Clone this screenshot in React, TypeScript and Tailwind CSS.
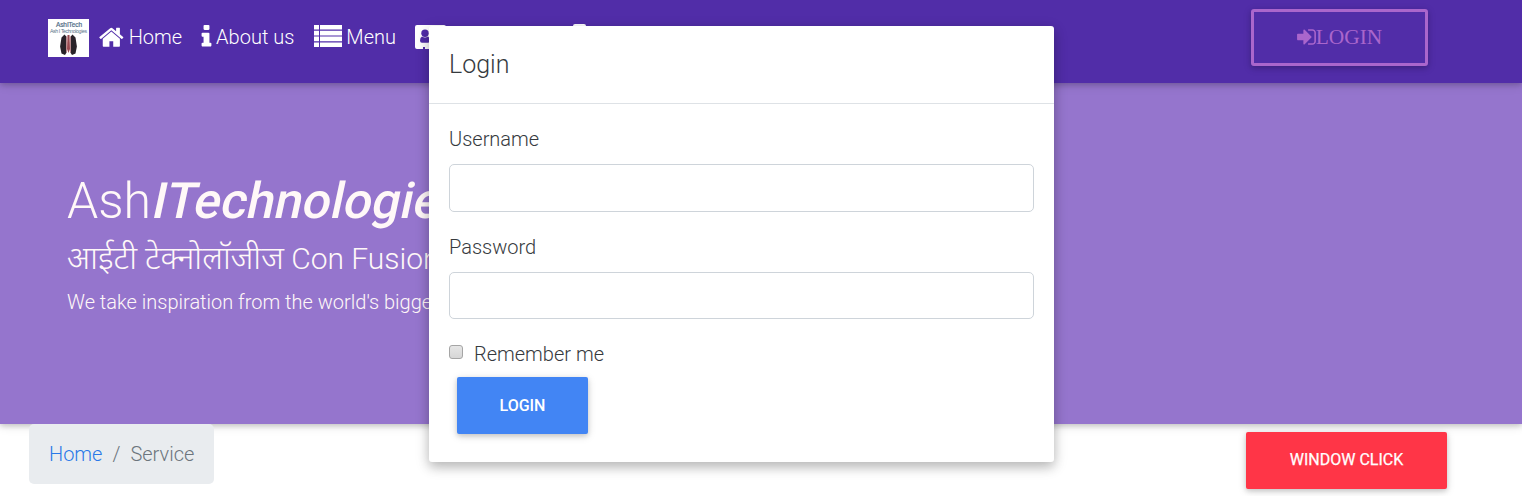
import React from "react";

const home =
  "M1472 992v480q0 26-19 45t-45 19h-384v-384h-256v384h-384q-26 0-45-19t-19-45v-480q0-1 .5-3t.5-3l575-474 575 474q1 2 1 6zm223-69l-62 74q-8 9-21 11h-3q-13 0-21-7l-692-577-692 577q-12 8-24 7-13-2-21-11l-62-74q-8-10-7-23.5t11-21.5l719-599q32-26 76-26t76 26l244 204v-195q0-14 9-23t23-9h192q14 0 23 9t9 23v408l219 182q10 8 11 21.5t-7 23.5z";
const info =
  "M1216 1344v128q0 26-19 45t-45 19h-512q-26 0-45-19t-19-45v-128q0-26 19-45t45-19h64v-384h-64q-26 0-45-19t-19-45v-128q0-26 19-45t45-19h384q26 0 45 19t19 45v576h64q26 0 45 19t19 45zm-128-1152v192q0 26-19 45t-45 19h-256q-26 0-45-19t-19-45v-192q0-26 19-45t45-19h256q26 0 45 19t19 45z";
const signIn =
  "M1312 896q0 26-19 45l-544 544q-19 19-45 19t-45-19-19-45v-288h-448q-26 0-45-19t-19-45v-384q0-26 19-45t45-19h448v-288q0-26 19-45t45-19 45 19l544 544q19 19 19 45zm352-352v704q0 119-84.5 203.5t-203.5 84.5h-320q-13 0-22.5-9.5t-9.5-22.5q0-4-1-20t-.5-26.5 3-23.5 10-19.5 20.5-6.5h320q66 0 113-47t47-113v-704q0-66-47-113t-113-47h-312l-11.5-1-11.5-3-8-5.5-7-9-2-13.5q0-4-1-20t-.5-26.5 3-23.5 10-19.5 20.5-6.5h320q119 0 203.5 84.5t84.5 203.5z";

function Logo() {
  return (
    <svg width="41" height="38" viewBox="0 0 41 38" className="shrink-0 bg-white">
      <text x="21" y="7.5" textAnchor="middle" fontSize="6.5" fontWeight="400" stroke="#58758c" strokeWidth=".2" fill="#48657f" fontFamily="Liberation Sans, sans-serif" textLength="26">AshITech</text>
      <text x="20.5" y="13.5" textAnchor="middle" fontSize="5.2" fill="#58758c" fontFamily="Liberation Sans, sans-serif" textLength="37">Ash I Technologies</text>
      <path d="M16.5 15.5l1.8 2-.3 10 .6 6-1.6 2.5-3.5-1.5-1.4-7 1.4-9z" fill="#292329" />
      <path d="M24.5 15.5l-1.8 2 .3 10-.6 6 1.6 2.5 3.5-1.5 1.4-7-1.4-9z" fill="#292329" />
      <path d="M18 17l1 1v15l-1 1zM23 17l-1 1v15l1 1z" fill="#b98a8d" />
      <path d="M19.5 16h2l.5 14-1.5 4-1.5-4z" fill="#9a4a50" />
    </svg>
  );
}

function Field({ label, inputClass }: { label: string; inputClass: string }) {
  return (
    <label className="block h-[108px]">
      <span className="block h-[40px] leading-[30px]">{label}</span>
      <input className={`block w-full rounded-[5px] border border-[#ced4da] bg-white px-4 outline-none ${inputClass}`} />
    </label>
  );
}

export default function App() {
  return (
    <div className="relative h-[496px] w-full overflow-hidden bg-white font-['Roboto','Noto_Sans',sans-serif] text-[20px] font-light text-[#212529]">
      <header className="relative z-10 flex h-[83px] items-start justify-between bg-[#512da8] pl-12 pr-[94px] text-white shadow-[0_2px_5px_rgba(0,0,0,.16),0_2px_10px_rgba(0,0,0,.12)]">
        <nav className="flex pt-[19px] leading-[36px]">
          <Logo />
          <a className="ml-[9px] flex">
            <svg className="mt-[5px] mr-[4px] h-[26.67px] w-[26.67px]" viewBox="0 0 1792 1792" fill="currentColor"><path d={home} /></svg>Home
          </a>
          <a className="ml-[19px] flex">
            <svg className="mt-[4px] mr-1 h-[27.5px] w-[11px]" viewBox="540 0 712 1792" fill="currentColor"><path d={info} /></svg>About us
          </a>
          <a className="ml-5 flex">
            <svg className="mt-[6px] mr-1 h-[22px] w-7" viewBox="0 0 28 22" fill="currentColor">
              <path d="M0 0h5v4.6H0zM6 0h22v4.6H6zM0 5.8h5v4.6H0zM6 5.8h22v4.6H6zM0 11.6h5v4.6H0zM6 11.6h22v4.6H6zM0 17.4h5V22H0zM6 17.4h22V22H6z" />
            </svg>Menu
          </a>
          <a className="ml-[19px] flex">
            <svg className="mt-[6px] h-6 w-[31px]" viewBox="0 0 31 24" fill="currentColor">
              <path d="M2 0h27q2 0 2 2v20q0 2-2 2H10v-2H8v2H2q-2 0-2-2V2q0-2 2-2z" />
              <circle cx="10" cy="8.2" r="3.7" fill="#512da8" />
              <path d="M7 11.5q3 2 6 0 2 1 2 4 0 2.2-2 2.2H7q-2 0-2-2.2 0-3 2-4z" fill="#512da8" />
            </svg>
          </a>
          <svg className="ml-[127px] mt-[5px] h-6 w-[13px]" viewBox="0 0 13 24" fill="currentColor"><rect width="13" height="24" rx="2" /></svg>
        </nav>
        <button className="mt-[9px] flex h-[57px] w-[177px] items-center justify-center rounded-[3px] border-[3px] border-[#aa66cc] font-['Liberation_Serif',serif] text-[21.4px] font-normal text-[#aa66cc] shadow-[0_2px_5px_rgba(0,0,0,.16),0_2px_10px_rgba(0,0,0,.12)]">
          <svg className="mb-[2px] h-[22px] w-[19px]" viewBox="128 0 1536 1792" fill="currentColor"><path d={signIn} /></svg>
          <span>LOGIN</span>
        </button>
      </header>

      <section className="h-[341px] whitespace-nowrap bg-[#9575cd] pl-[67px] pt-[88px] text-[#fff8f8] shadow-[0_2px_5px_rgba(0,0,0,.16),0_2px_10px_rgba(0,0,0,.12)]">
        <h1 className="h-[63px] text-[50px] leading-[60px]">Ash<em className="-ml-px inline-block origin-[0_47px] -skew-x-[12deg] font-medium not-italic">ITechnologies</em></h1>
        <h2 className="h-[51px] text-[30px] leading-[48px]"><span className="text-[32.3px]">आईटी टेक्नोलॉजीज</span> Con Fusion</h2>
        <p className="leading-[34px]">We take inspiration from the world's biggest</p>
      </section>

      <div className="flex items-start justify-between pl-[29px] pr-[75px]">
        <div className="relative flex h-[60px] w-[185px] rounded-[5px] bg-[#e9ecef] pl-5 leading-[60px] text-[#6c757d]">
          <a className="text-[#2979e8]">Home</a><span className="px-[10px]">/</span><span>Service</span>
        </div>
        <button className="relative mt-2 h-[57px] w-[201px] rounded-[2px] bg-[#ff3547] pb-[2px] text-[16px] font-normal text-white shadow-[0_2px_5px_rgba(0,0,0,.16),0_2px_10px_rgba(0,0,0,.12)] [-webkit-text-stroke:.25px_white]">WINDOW CLICK</button>
      </div>

      <div role="dialog" className="absolute left-[429px] top-[26px] z-20 h-[436px] w-[625px] rounded-[3px] bg-white text-[#363a3e] shadow-[0_5px_11px_rgba(0,0,0,.18),0_4px_15px_rgba(0,0,0,.15)]">
        <h4 className="h-[78px] border-b border-[#dee2e6] px-5 text-[25px] leading-[78px]">Login</h4>
        <form className="px-5 pt-5">
          <Field label="Username" inputClass="h-12" />
          <Field label="Password" inputClass="h-[47px]" />
          <label className="flex h-[37px] leading-[28px]">
            <input type="checkbox" className="mt-[5px] mr-[11px] h-[14px] w-[14px] appearance-none rounded-[3px] border border-[#a5a5a5] bg-linear-to-b from-[#e6e6e6] to-[#d6d6d6]" />
            <span>Remember me</span>
          </label>
          <button type="button" className="ml-2 block h-[57px] w-[131px] rounded-[2px] bg-[#4285f4] text-[16px] font-medium text-white shadow-[0_2px_5px_rgba(0,0,0,.16),0_2px_10px_rgba(0,0,0,.12)]">LOGIN</button>
        </form>
      </div>
    </div>
  );
}
